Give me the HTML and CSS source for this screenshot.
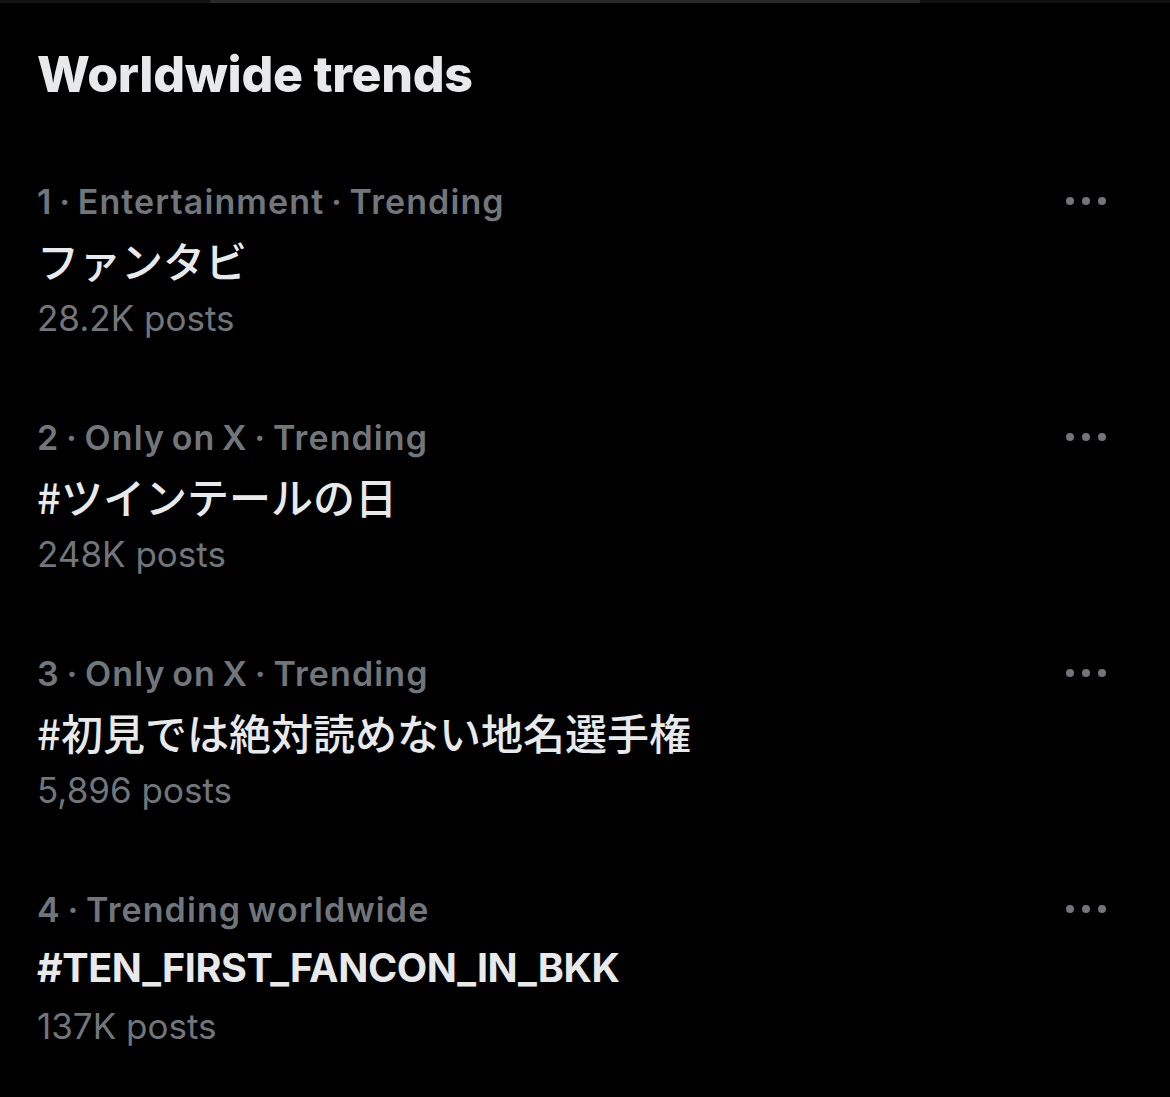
FILE: index.html
```html
<!DOCTYPE html>
<html lang="ja">
<head>
<meta charset="utf-8">
<title>Worldwide trends</title>
<link rel="stylesheet" href="styles.css">
</head>
<body>
<div class="topbar"></div>
<main class="panel">
  <h1 class="heading">Worldwide trends</h1>
  <ul class="trends">
    <li class="trend">
      <div class="trend-body">
        <div class="meta">1 · Entertainment · Trending</div>
        <div class="title">ファンタビ</div>
        <div class="count">28.2K posts</div>
      </div>
      <div class="more"><span></span><span></span><span></span></div>
    </li>
    <li class="trend">
      <div class="trend-body">
        <div class="meta">2 · Only on X · Trending</div>
        <div class="title">#ツインテールの日</div>
        <div class="count">248K posts</div>
      </div>
      <div class="more"><span></span><span></span><span></span></div>
    </li>
    <li class="trend">
      <div class="trend-body">
        <div class="meta">3 · Only on X · Trending</div>
        <div class="title">#初見では絶対読めない地名選手権</div>
        <div class="count">5,896 posts</div>
      </div>
      <div class="more"><span></span><span></span><span></span></div>
    </li>
    <li class="trend">
      <div class="trend-body">
        <div class="meta">4 · Trending worldwide</div>
        <div class="title latin">#TEN_FIRST_FANCON_IN_BKK</div>
        <div class="count">137K posts</div>
      </div>
      <div class="more"><span></span><span></span><span></span></div>
    </li>
  </ul>
</main>
</body>
</html>
```
FILE: styles.css
```css
html, body {
  margin: 0;
  padding: 0;
  background: #000;
}
body {
  font-family: "Inter", "Noto Sans", sans-serif;
  color: #e7e9ea;
  min-height: 1097px;
}
.topbar {
  height: 3px;
  background: linear-gradient(to right, #141414 0, #141414 210px, #2a2a2a 210px, #2a2a2a 920px, #111 920px);
}
.panel {
  padding: 0 37px 0 37px;
}
.heading {
  margin: 42px 0 0 0;
  font-family: "Inter", sans-serif;
  font-weight: 800;
  font-size: 50px;
  line-height: 58px;
  color: #e7e9ea;
  letter-spacing: -0.3px;
}
.trends {
  list-style: none;
  margin: 70px 0 0 0;
  padding: 0;
}
.trend {
  display: flex;
  justify-content: space-between;
  align-items: flex-start;
  height: 236px;
}
.trend-body {
  display: flex;
  flex-direction: column;
}
.meta {
  font-family: "Inter", sans-serif;
  font-weight: 600;
  font-size: 34px;
  line-height: 58px;
  color: #71767b;
  letter-spacing: 1.1px;
  word-spacing: -3px;
}
.title {
  font-family: "Noto Sans CJK JP", "Noto Sans", sans-serif;
  font-weight: 500;
  font-size: 42px;
  line-height: 58px;
  color: #e7e9ea;
}
.title.latin {
  font-family: "Inter", "Noto Sans CJK JP", sans-serif;
  font-weight: 700;
  font-size: 39.5px;
  letter-spacing: -0.4px;
}
.count {
  font-family: "Inter", "Liberation Sans", sans-serif;
  font-weight: 400;
  font-size: 35px;
  line-height: 58px;
  color: #71767b;
}
.more {
  display: flex;
  gap: 8px;
  margin-top: 24px;
  margin-right: 27px;
}
.more span {
  width: 8px;
  height: 8px;
  border-radius: 50%;
  background: #71767b;
}
```
